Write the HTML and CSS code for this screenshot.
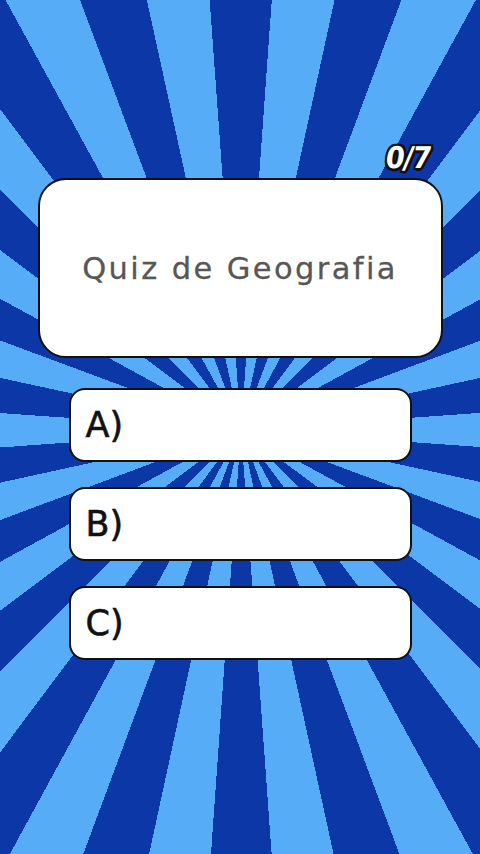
FILE: index.html
```html
<!DOCTYPE html>
<html lang="pt">
<head>
<meta charset="utf-8">
<title>Quiz de Geografia</title>
<link rel="stylesheet" href="styles.css">
</head>
<body>
<main class="screen">
  <div class="counter">0/7</div>
  <section class="question-card">
    <h1 class="question-title">Quiz de Geografia</h1>
  </section>
  <ul class="options">
    <li class="option">A)</li>
    <li class="option">B)</li>
    <li class="option">C)</li>
  </ul>
</main>
</body>
</html>
```
FILE: styles.css
```css
html, body {
  margin: 0;
  padding: 0;
}

.screen {
  width: 480px;
  height: 854px;
  box-sizing: border-box;
  overflow: hidden;
  display: flex;
  flex-direction: column;
  align-items: center;
  padding-top: 140px;
  background: repeating-conic-gradient(from -4.09deg at 241px 430px,
    #0b37a7 0deg 8.18deg,
    #57acf7 8.18deg 16.36deg);
  font-family: "DejaVu Sans", "Noto Sans", sans-serif;
}

.counter {
  align-self: flex-end;
  margin-right: 50px;
  height: 36px;
  font-family: "DejaVu Sans Condensed", "DejaVu Sans", sans-serif;
  font-weight: bold;
  font-size: 30px;
  line-height: 36px;
  color: #fff;
  letter-spacing: -1px;
  text-shadow:
    2px 0 0 #111, -2px 0 0 #111, 0 2px 0 #111, 0 -2px 0 #111,
    2px 2px 0 #111, -2px 2px 0 #111, 2px -2px 0 #111, -2px -2px 0 #111,
    3px 1px 0 #111, 1px 3px 0 #111;
  transform: skewX(-8deg);
}

.question-card {
  margin-top: 2px;
  width: 405px;
  height: 180px;
  box-sizing: border-box;
  background: #fff;
  border: 2.5px solid #111;
  border-radius: 28px;
  display: flex;
  align-items: center;
  justify-content: center;
}

.question-title {
  margin: 0;
  font-family: "DejaVu Sans", sans-serif;
  font-weight: normal;
  font-size: 30.5px;
  color: #575757;
  letter-spacing: 2.4px;
  -webkit-text-stroke: 0.3px #575757;
}

.options {
  list-style: none;
  margin: 30px 0 0;
  padding: 0;
  display: flex;
  flex-direction: column;
  gap: 25px;
}

.option {
  width: 343px;
  height: 74px;
  box-sizing: border-box;
  background: #fff;
  border: 2.5px solid #111;
  border-radius: 16px;
  display: flex;
  align-items: center;
  padding-left: 15px;
  font-family: "DejaVu Sans", sans-serif;
  font-size: 35px;
  font-weight: normal;
  color: #111;
  -webkit-text-stroke: 0.6px #111;
}
```
